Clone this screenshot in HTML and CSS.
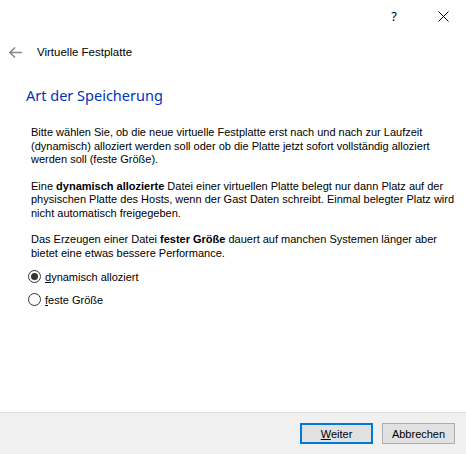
FILE: index.html
```html
<!DOCTYPE html>
<html lang="de">
<head>
<meta charset="utf-8">
<link rel="stylesheet" href="styles.css">
</head>
<body>
<div class="window">
  <div class="titlebar">
    <span class="tb-btn help">?</span>
    <span class="tb-btn close"><svg width="11" height="11" viewBox="0 0 11 11"><path d="M0.5 0.5L10.5 10.5M10.5 0.5L0.5 10.5" stroke="#000" stroke-width="1" fill="none"/></svg></span>
  </div>
  <div class="nav">
    <svg class="back" width="13" height="11" viewBox="0 0 13 11"><path d="M6 0.5L1 5.5L6 10.5M1 5.5H13" stroke="#8a8a8a" stroke-width="1.6" fill="none"/></svg>
    <span class="nav-title">Virtuelle Festplatte</span>
  </div>
  <div class="content">
    <h1 class="heading">Art der Speicherung</h1>
    <p class="para">Bitte wählen Sie, ob die neue virtuelle Festplatte erst nach und nach zur Laufzeit (dynamisch) alloziert werden soll oder ob die Platte jetzt sofort vollständig alloziert werden soll (feste Größe).</p>
    <p class="para">Eine <b>dynamisch allozierte</b> Datei einer virtuellen Platte belegt nur dann Platz auf der physischen Platte des Hosts, wenn der Gast Daten schreibt. Einmal belegter Platz wird nicht automatisch freigegeben.</p>
    <p class="para">Das Erzeugen einer Datei <b>fester Größe</b> dauert auf manchen Systemen länger aber bietet eine etwas bessere Performance.</p>
    <div class="options">
      <label class="radio"><span class="dot checked"></span><span><u>d</u>ynamisch alloziert</span></label>
      <label class="radio"><span class="dot"></span><span><u>f</u>este Größe</span></label>
    </div>
  </div>
  <div class="footer">
    <button class="btn primary"><u>W</u>eiter</button>
    <button class="btn">Abbrechen</button>
  </div>
</div>
</body>
</html>
```
FILE: styles.css
```css
html, body { margin: 0; padding: 0; background: #fff; }
.window {
  width: 466px; height: 454px;
  display: flex; flex-direction: column;
  font-family: "Liberation Sans", Arial, sans-serif;
  color: #000;
}
.titlebar {
  height: 32px; display: flex; justify-content: flex-end; align-items: center;
}
.tb-btn { width: 46px; height: 32px; display: flex; align-items: center; justify-content: center; font-family: "Noto Sans", sans-serif; font-size: 13px; }
.help { margin-right: 0; padding-right: 3px; }
.close { width: 46px; }
.nav { height: 44px; display: flex; align-items: center; padding-left: 9px; margin-top: -2px; }
.back { margin-right: 15px; }
.nav-title { font-family: "Liberation Sans", Arial, sans-serif; font-size: 11.5px; }
.content { flex: 1; padding: 0 6px 0 31px; }
.heading {
  margin: 9px 0 0 -5px; font-family: "Noto Sans", sans-serif; font-weight: normal;
  font-size: 14.5px; color: #0033bc; line-height: 24px;
}
.para { margin: 19px 0 0; font-size: 11px; line-height: 13.5px; }
.para + .para { margin-top: 13px; }
.options { display: flex; flex-direction: column; gap: 10px; margin-top: 10px; }
.radio { display: flex; align-items: center; font-size: 11px; gap: 4px; margin-left: -3px; }
.dot { width: 11px; height: 11px; border: 1px solid #333; border-radius: 50%; display: flex; align-items: center; justify-content: center; }
.dot.checked::after { content: ""; width: 7px; height: 7px; border-radius: 50%; background: #333; }
.footer {
  height: 41px; background: #f0f0f0; border-top: 1px solid #dfdfdf;
  display: flex; justify-content: flex-end; align-items: center; gap: 9px; padding-right: 11px;
}
.btn {
  width: 73px; height: 21px; background: #e1e1e1; border: 1px solid #adadad;
  font-family: "Liberation Sans", Arial, sans-serif; font-size: 11px; padding: 0; color: #000;
}
.btn.primary { border: 2px solid #0078d7; }
```
